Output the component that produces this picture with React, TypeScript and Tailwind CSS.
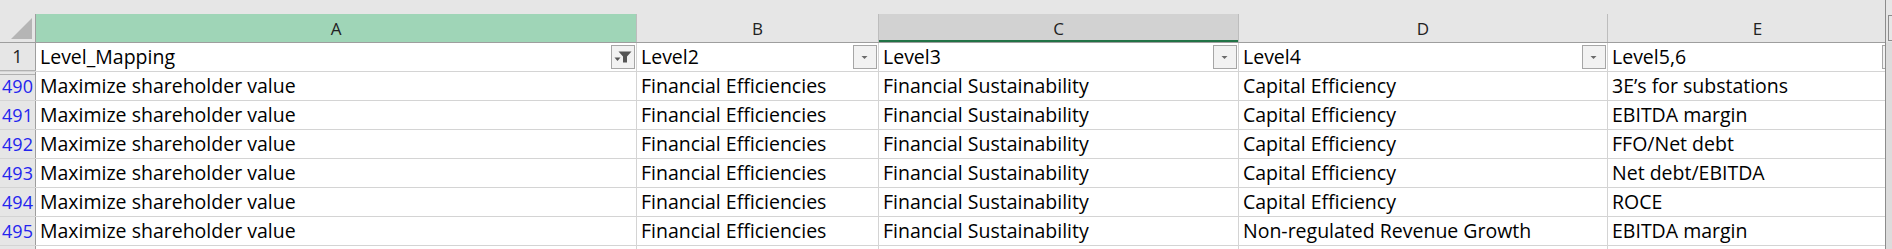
import React from "react";

const FONT = { fontFamily: "'Open Sans', Lato, sans-serif" };

const cols = [
  { letter: "A", w: "w-[601px]", hdr: "bg-[#9fd5b7]", title: "Level_Mapping", filtered: true },
  { letter: "B", w: "w-[242px]", hdr: "bg-[#e6e6e6]", title: "Level2" },
  { letter: "C", w: "w-[360px]", hdr: "bg-[#d2d2d2] shadow-[inset_0_-2px_0_#217346]", title: "Level3" },
  { letter: "D", w: "w-[369px]", hdr: "bg-[#e6e6e6]", title: "Level4" },
  { letter: "E", w: "w-[300px]", hdr: "bg-[#e6e6e6]", title: "Level5,6" },
];

const rows: [string, string[]][] = [
  ["490", ["Maximize shareholder value", "Financial Efficiencies", "Financial Sustainability", "Capital Efficiency", "3E’s for substations"]],
  ["491", ["Maximize shareholder value", "Financial Efficiencies", "Financial Sustainability", "Capital Efficiency", "EBITDA margin"]],
  ["492", ["Maximize shareholder value", "Financial Efficiencies", "Financial Sustainability", "Capital Efficiency", "FFO/Net debt"]],
  ["493", ["Maximize shareholder value", "Financial Efficiencies", "Financial Sustainability", "Capital Efficiency", "Net debt/EBITDA"]],
  ["494", ["Maximize shareholder value", "Financial Efficiencies", "Financial Sustainability", "Capital Efficiency", "ROCE"]],
  ["495", ["Maximize shareholder value", "Financial Efficiencies", "Financial Sustainability", "Non-regulated Revenue Growth", "EBITDA margin"]],
];

function FilterButton({ filtered }: { filtered?: boolean }) {
  return (
    <div className="w-[24px] h-[24px] shrink-0 border border-[#a6a6a6] bg-[#f2f2f2] flex items-center justify-center">
      {filtered ? (
        <svg width="22" height="22" viewBox="0 0 22 22">
          <path d="M6.5 5.5 H19.5 L15 10.5 V16.5 H11 V10.5 Z" fill="#555" />
          <path d="M2.5 11.5 H8.5 L5.5 15 Z" fill="#555" />
        </svg>
      ) : (
        <svg width="22" height="22" viewBox="0 0 22 22">
          <path d="M7.5 10 H13.5 L10.5 13 Z" fill="#6a6a6a" />
        </svg>
      )}
    </div>
  );
}

export default function App() {
  return (
    <div className="w-[1892px] h-[249px] overflow-hidden bg-[#e6e6e6] flex" style={FONT}>
      <div className="w-[1885px] shrink-0 overflow-hidden flex flex-col">
        <div className="h-[14px] shrink-0 bg-[#e6e6e6]" />
        {/* column headers */}
        <div className="flex h-[29px] shrink-0 border-b border-[#9e9e9e]">
          <div className="w-[36px] shrink-0 border-r border-[#9e9e9e] bg-[#e6e6e6] flex items-end justify-end pr-[3px] pb-[3px]">
            <svg width="21" height="21" viewBox="0 0 21 21">
              <path d="M21 0 V21 H0 Z" fill="#b5b5b5" />
            </svg>
          </div>
          {cols.map((c) => (
            <div
              key={c.letter}
              className={`${c.w} shrink-0 border-r border-[#bdbdbd] ${c.hdr} flex items-end justify-center pb-[2px] text-[17px] leading-[22px] text-[#222]`}
            >
              {c.letter}
            </div>
          ))}
        </div>
        {/* row 1 */}
        <div className="flex h-[29px] shrink-0 border-b border-[#d4d4d4] bg-white">
          <div className="w-[36px] shrink-0 border-r border-[#9e9e9e] bg-[#e6e6e6] flex items-center justify-center text-[18px] text-[#222] border-b border-b-[#b0b0b0]">
            1
          </div>
          {cols.map((c) => (
            <div
              key={c.letter}
              className={`${c.w} shrink-0 border-r border-[#d4d4d4] flex items-center justify-between pl-[4px] pr-[1px] text-[19.5px] leading-[22px] text-black`}
            >
              <span className="whitespace-nowrap">{c.title}</span>
              <FilterButton filtered={c.filtered} />
            </div>
          ))}
        </div>
        {rows.map(([n, vals], i) => (
          <div key={n} className="flex h-[29px] shrink-0 border-b border-[#d4d4d4] bg-white">
            <div
              className={`w-[36px] shrink-0 border-r border-[#9e9e9e] bg-[#e6e6e6] flex items-center justify-center overflow-hidden text-[18px] text-[#2424ee] ${
                i === 0 ? "shadow-[inset_0_2px_0_#e6e6e6,inset_0_3px_0_#b0b0b0]" : ""
              }`}
            >
              {n}
            </div>
            {vals.map((v, j) => (
              <div
                key={j}
                className={`${cols[j].w} shrink-0 border-r border-[#d4d4d4] flex items-center pl-[4px] text-[19.5px] leading-[22px] text-black whitespace-nowrap overflow-hidden`}
              >
                {v}
              </div>
            ))}
          </div>
        ))}
        <div className="flex flex-1 bg-white">
          <div className="w-[36px] shrink-0 border-r border-[#9e9e9e] bg-[#e6e6e6]" />
          {cols.map((c) => (
            <div key={c.letter} className={`${c.w} shrink-0 border-r border-[#d4d4d4]`} />
          ))}
        </div>
      </div>
      <div className="w-[7px] shrink-0 flex flex-col border-l border-[#8c8c8c] bg-[#dcdcdc]">
        <div className="h-[42px] shrink-0 bg-[#e6e6e6] flex">
          <div className="ml-[2px] mt-[15px] flex-1 border-l border-t border-b border-[#8c8c8c] h-[26px]" />
        </div>
      </div>
    </div>
  );
}
